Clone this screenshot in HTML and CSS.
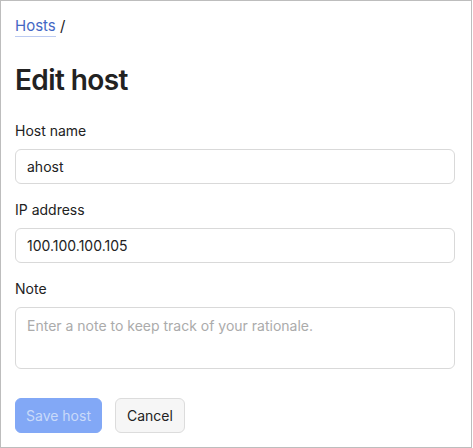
FILE: index.html
```html
<!DOCTYPE html>
<html lang="en">
<head>
    <meta charset="UTF-8">
    <meta name="viewport" content="width=device-width, initial-scale=1.0">
    <title>Edit host</title>
    <link rel="stylesheet" href="styles.css">
</head>
<body>
    <div class="page">
        <nav class="breadcrumb">
            <a href="#" class="crumb-link">Hosts</a> /
        </nav>

        <h1>Edit host</h1>

        <form id="hostForm">
            <div class="form-group">
                <label for="hostname">Host name</label>
                <input type="text" id="hostname" value="ahost">
            </div>
            <div class="form-group">
                <label for="ip">IP address</label>
                <input type="text" id="ip" value="100.100.100.105">
            </div>
            <div class="form-group">
                <label for="note">Note</label>
                <textarea id="note" placeholder="Enter a note to keep track of your rationale."></textarea>
            </div>
            <div class="actions">
                <button type="submit" class="btn btn-primary" disabled>Save host</button>
                <button type="button" class="btn btn-secondary">Cancel</button>
            </div>
        </form>
    </div>
</body>
</html>
```

FILE: styles.css
```css
* {
    box-sizing: border-box;
    font-family: Inter, "Noto Sans", sans-serif;
}

body {
    margin: 0;
    background: #fff;
    color: #222;
}

.page {
    width: 472px;
    height: 448px;
    border: 1px solid #bdbdbd;
    padding: 14px 16px 0 14px;
}

.breadcrumb {
    font-size: 15px;
    line-height: 22px;
    color: #222;
}

.crumb-link {
    color: #4467c4;
    text-decoration: none;
    border-bottom: 1px solid #bccbf1;
    padding-bottom: 1px;
}

h1 {
    font-size: 28px;
    font-weight: 600;
    line-height: 36px;
    margin: 25px 0 23px;
    letter-spacing: -0.6px;
}

.form-group {
    margin-bottom: 16px;
}

.form-group label {
    display: block;
    font-size: 14px;
    line-height: 20px;
    margin-bottom: 8px;
}

.form-group input,
.form-group textarea {
    display: block;
    width: 100%;
    font-size: 14px;
    color: #222;
    border: 1px solid #d9d9d9;
    border-radius: 6px;
    padding: 0 11px;
    background: #fff;
}

.form-group input {
    height: 35px;
}

.form-group textarea {
    height: 62px;
    padding-top: 8px;
    line-height: 20px;
    resize: none;
}

.form-group textarea::placeholder {
    color: #ababab;
}

.actions {
    display: flex;
    gap: 13px;
    margin-top: 29px;
}

.btn {
    height: 35px;
    font-size: 14px;
    font-weight: 400;
    border-radius: 6px;
    padding: 0 10px;
}

.btn-primary {
    background-color: #82a8f6;
    color: #c9daf9;
    border: 1px solid #82a8f6;
}

.btn-secondary {
    background-color: #f6f6f6;
    color: #222;
    border: 1px solid #dcdcdc;
    padding: 0 11px;
}
```
